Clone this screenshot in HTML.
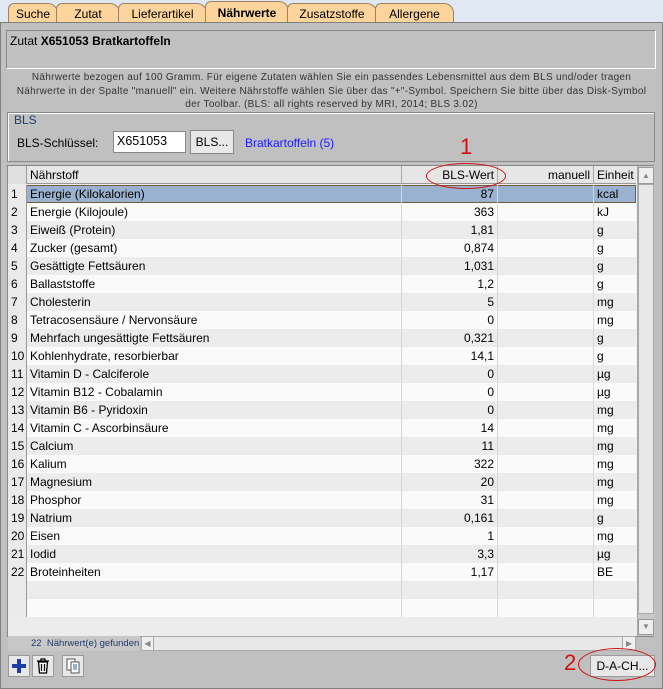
<!DOCTYPE html>
<html><head><meta charset="utf-8"><style>
*{box-sizing:border-box;margin:0;padding:0}
body{width:663px;height:689px;overflow:hidden;background:#dfe8f3;font-family:"Liberation Sans",sans-serif;font-size:12px;color:#000;position:relative}
.a{position:absolute}
.tab{position:absolute;top:3px;height:20px;background:#fcd49c;border:1px solid #a08060;border-bottom:none;border-radius:6px 10px 0 0;font-size:12px;text-align:center;line-height:20px}
.panel{position:absolute;left:0;top:22px;width:663px;height:667px;background:#c0c0c0;border:1px solid #808080}
.row{position:absolute;left:8px;width:628px;height:18px;line-height:18px;font-size:12px}
.row div{position:absolute;top:0;height:18px;border-right:1px solid #d8d8d8}
.c0{left:0;width:19px;background:#eaeaea;border-right:1px solid #999!important;padding-left:3px}
.c1{left:19px;width:375px;padding-left:3px}
.c2{left:394px;width:96px;text-align:right;padding-right:3px}
.c3{left:490px;width:96px}
.c4{left:586px;width:42px;padding-left:3px;border-right:none!important}
</style></head><body>
<div class="tab" style="left:8px;width:50px">Suche</div>
<div class="tab" style="left:56px;width:64px">Zutat</div>
<div class="tab" style="left:118px;width:89px">Lieferartikel</div>
<div class="tab" style="left:205px;width:84px;font-weight:bold;top:1px;height:22px;line-height:22px">Nährwerte</div>
<div class="tab" style="left:287px;width:90px">Zusatzstoffe</div>
<div class="tab" style="left:375px;width:79px">Allergene</div>
<div class="panel"></div>
<div class="a" style="left:6px;top:30px;width:650px;height:39px;border:1px solid #888;border-right-color:#fff;border-bottom-color:#fff;background:#c0c0c0"></div>
<div class="a" style="left:10px;top:34px;font-size:12px">Zutat <b>X651053 Bratkartoffeln</b></div>
<div class="a" style="left:0px;top:71px;width:663px;text-align:center;font-size:10px;line-height:13.5px;color:#333;letter-spacing:0.3px;white-space:nowrap">Nährwerte bezogen auf 100 Gramm. Für eigene Zutaten wählen Sie ein passendes Lebensmittel aus dem BLS und/oder tragen<br>Nährwerte in der Spalte "manuell" ein. Weitere Nährstoffe wählen Sie über das "+"-Symbol. Speichern Sie bitte über das Disk-Symbol<br>der Toolbar. (BLS: all rights reserved by MRI, 2014; BLS 3.02)</div>
<div class="a" style="left:7px;top:112px;width:648px;height:50px;border:1px solid #888;box-shadow:1px 1px 0 #fff inset"></div>
<div class="a" style="left:14px;top:113px;color:#203a6a">BLS</div>
<div class="a" style="left:17px;top:136px">BLS-Schlüssel:</div>
<div class="a" style="left:113px;top:131px;width:73px;height:22px;background:#fff;border:1px solid #888;padding:2px 3px;font-size:12.5px">X651053</div>
<div class="a" style="left:190px;top:130px;width:44px;height:24px;background:#e8e8e8;border:1px solid #888;text-align:center;line-height:22px">BLS...</div>
<div class="a" style="left:245px;top:136px;color:#1a1aff">Bratkartoffeln (5)</div>
<div class="a" style="left:7px;top:165px;width:647px;height:472px;background:#ececec;border:1px solid #888"></div>
<div class="row" style="top:166px;background:#e6e6e6;border-bottom:1px solid #999">
<div class="c0" style="background:#e0e0e0"></div><div class="c1" style="border-right:1px solid #aaa">Nährstoff</div><div class="c2" style="border-right:1px solid #aaa">BLS-Wert</div><div class="c3" style="text-align:right;padding-right:3px;border-right:1px solid #aaa">manuell</div><div class="c4">Einheit</div></div>
<div id="rows"></div>
<div class="a" style="left:637px;top:166px;width:17px;height:470px;background:#c8c8c8;border-left:1px solid #aaa"></div>
<div class="a" style="left:638px;top:167px;width:16px;height:17px;background:#eee;border:1px solid #999;font-size:8px;text-align:center;line-height:15px;color:#888">▲</div>
<div class="a" style="left:638px;top:184px;width:16px;height:430px;background:#e8e8e8;border:1px solid #aaa"></div>
<div class="a" style="left:638px;top:619px;width:16px;height:16px;background:#eee;border:1px solid #999;font-size:8px;text-align:center;line-height:14px;color:#888">▼</div>
<div class="a" style="left:8px;top:636px;width:132px;height:15px;background:#c8c8c8;font-size:9.5px;color:#203a6a;padding-left:23px;line-height:15px;white-space:nowrap;overflow:hidden">22&nbsp; Nährwert(e) gefunden.</div>
<div class="a" style="left:141px;top:636px;width:495px;height:15px;background:#e8e8e8;border:1px solid #aaa"></div>
<div class="a" style="left:141px;top:636px;width:13px;height:15px;background:#f0f0f0;border:1px solid #aaa;font-size:8px;color:#888;text-align:center;line-height:13px">◀</div>
<div class="a" style="left:622px;top:636px;width:14px;height:15px;background:#f0f0f0;border:1px solid #aaa;font-size:8px;color:#888;text-align:center;line-height:13px">▶</div>
<div class="a" style="left:8px;top:655px;width:22px;height:22px;background:#e8e8e8;border:1px solid #999"><svg width="20" height="20"><path d="M10 3v14M3 10h14" stroke="#1a3ea8" stroke-width="4"/></svg></div>
<div class="a" style="left:32px;top:655px;width:22px;height:22px;background:#e8e8e8;border:1px solid #999"><svg width="20" height="20"><path d="M4 5h12M8 5V3h4v2M5.5 6l1 11h7l1-11z M8.5 8v7M11.5 8v7" stroke="#000" stroke-width="1.3" fill="#fff"/></svg></div>
<div class="a" style="left:62px;top:655px;width:22px;height:22px;background:#e8e8e8;border:1px solid #999"><svg width="20" height="20"><rect x="4" y="3" width="8" height="11" fill="#fff" stroke="#555"/><rect x="8" y="6" width="8" height="11" fill="#fff" stroke="#555"/><path d="M10 9h4M10 11h4M10 13h4" stroke="#2a6aa0"/></svg></div>
<div class="a" style="left:564px;top:650px;color:#d01010;font-size:22px">2</div>
<div class="a" style="left:590px;top:655px;width:65px;height:22px;background:#e8e8e8;border:1px solid #999;text-align:center;line-height:20px">D-A-CH...</div>
<div class="a" style="left:578px;top:648px;width:78px;height:33px;border:1.5px solid #d01010;border-radius:50%"></div>
<div class="a" style="left:460px;top:134px;color:#d01010;font-size:22px">1</div>
<div class="a" style="left:426px;top:163px;width:80px;height:26px;border:1.5px solid #d01010;border-radius:50%"></div>
<script>
var d=[["Energie (Kilokalorien)","87","kcal"],["Energie (Kilojoule)","363","kJ"],["Eiweiß (Protein)","1,81","g"],["Zucker (gesamt)","0,874","g"],["Gesättigte Fettsäuren","1,031","g"],["Ballaststoffe","1,2","g"],["Cholesterin","5","mg"],["Tetracosensäure / Nervonsäure","0","mg"],["Mehrfach ungesättigte Fettsäuren","0,321","g"],["Kohlenhydrate, resorbierbar","14,1","g"],["Vitamin D - Calciferole","0","µg"],["Vitamin B12 - Cobalamin","0","µg"],["Vitamin B6 - Pyridoxin","0","mg"],["Vitamin C - Ascorbinsäure","14","mg"],["Calcium","11","mg"],["Kalium","322","mg"],["Magnesium","20","mg"],["Phosphor","31","mg"],["Natrium","0,161","g"],["Eisen","1","mg"],["Iodid","3,3","µg"],["Broteinheiten","1,17","BE"],["","",""],["","",""]];
var h="";d.forEach(function(r,i){var bg=i==0?"#9ab2cf":(i%2?"#fafafa":"#ececec");var n=i<22?i+1:"";h+='<div class="row" style="top:'+(185+i*18)+'px;background:'+bg+(i==0?';outline:1px solid #7a5a3a;outline-offset:-1px':'')+'"><div class="c0">'+n+'</div><div class="c1">'+r[0]+'</div><div class="c2">'+r[1]+'</div><div class="c3"></div><div class="c4">'+r[2]+'</div></div>';});
document.getElementById("rows").innerHTML=h;
</script>
</body></html>
